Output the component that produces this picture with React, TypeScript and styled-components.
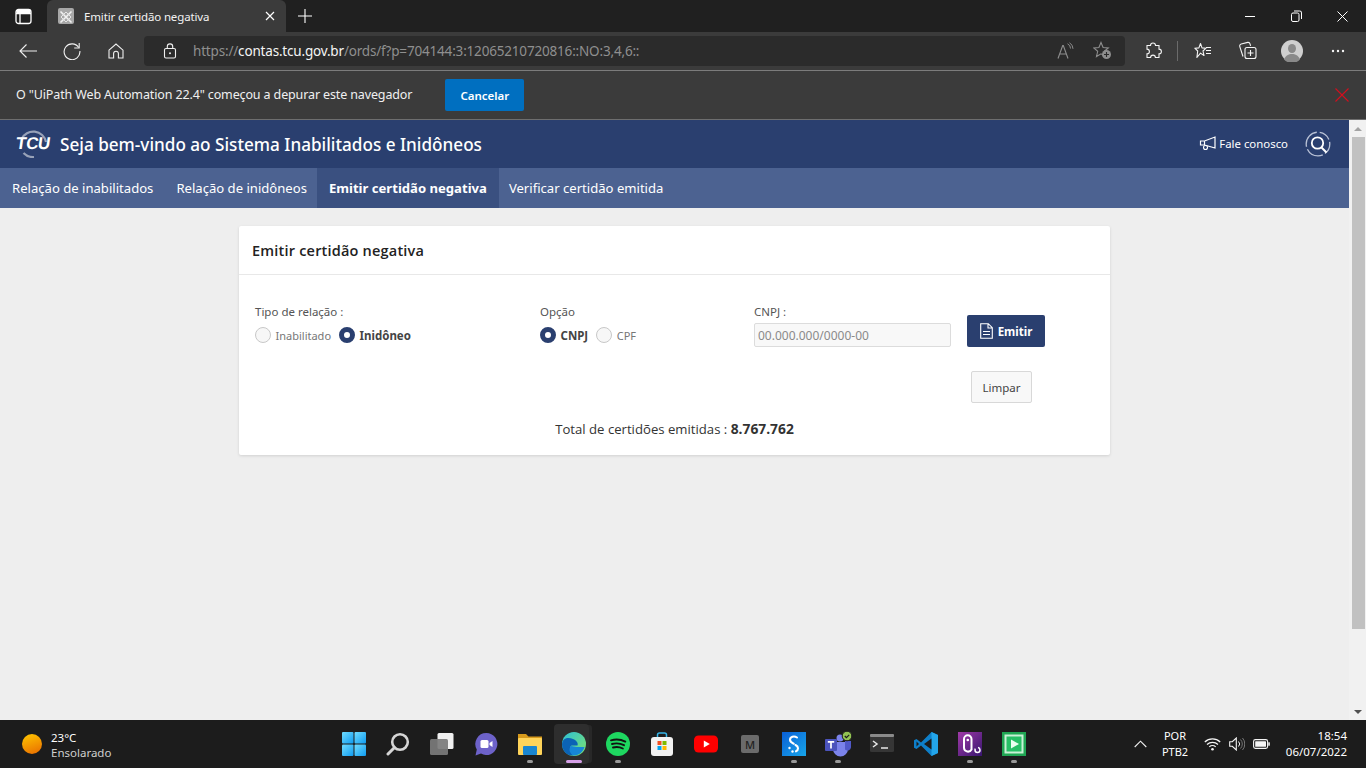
import React from "react";
import styled, { createGlobalStyle } from "styled-components";

const UI_FONT = `"Noto Sans", "Open Sans", "Liberation Sans", sans-serif`;

const App: React.FC = () => {
    return (
        <Screen>
            <GlobalStyle />
            <TabStrip>
                <TabSideButton>
                    <Glyph width="17" height="17" viewBox="0 0 17 17">
                        <rect x="1" y="1.5" width="15" height="14" rx="2.5" fill="none" stroke="#fff" strokeWidth="1.3" />
                        <path d="M1 5.5h15M5 5.5v10" stroke="#fff" strokeWidth="1.3" fill="none" />
                        <rect x="1.5" y="2" width="14" height="3.5" fill="#fff" />
                    </Glyph>
                </TabSideButton>
                <Tab>
                    <Favicon>
                        <svg width="16" height="16" viewBox="0 0 16 16">
                            <path d="M2.5 2.5l11 11M13.5 2.5l-11 11" stroke="#f2f2f2" strokeWidth="1.6" fill="none" />
                            <path d="M3 8l5-5 5 5-5 5z" stroke="#e6e6e6" strokeWidth="1" fill="none" />
                        </svg>
                    </Favicon>
                    <TabTitle>Emitir certidão negativa</TabTitle>
                    <TabClose>
                        <svg width="10" height="10" viewBox="0 0 10 10">
                            <path d="M1 1l8 8M9 1l-8 8" stroke="#fff" strokeWidth="1.2" />
                        </svg>
                    </TabClose>
                </Tab>
                <NewTab>
                    <svg width="14" height="14" viewBox="0 0 14 14">
                        <path d="M7 0v14M0 7h14" stroke="#fff" strokeWidth="1.1" />
                    </svg>
                </NewTab>
                <WindowControls>
                    <WindowButton>
                        <svg width="10" height="10" viewBox="0 0 10 10">
                            <path d="M0 5.5h10" stroke="#fff" strokeWidth="1" />
                        </svg>
                    </WindowButton>
                    <WindowButton>
                        <svg width="11" height="12" viewBox="0 0 11 12">
                            <rect x="0.5" y="3" width="7.5" height="8.5" rx="1.5" fill="none" stroke="#fff" />
                            <path d="M3 1h5.5A1.8 1.8 0 0 1 10.5 3v6" fill="none" stroke="#fff" />
                        </svg>
                    </WindowButton>
                    <WindowButton>
                        <svg width="11" height="11" viewBox="0 0 11 11">
                            <path d="M.5.5l10 10M10.5.5l-10 10" stroke="#fff" strokeWidth="1" />
                        </svg>
                    </WindowButton>
                </WindowControls>
            </TabStrip>

            <Toolbar>
                <NavIcons>
                    <NavIcon>
                        <svg width="20" height="16" viewBox="0 0 20 16">
                            <path d="M19 8H2M8.5 1.5L2 8l6.5 6.5" stroke="#f0f0f0" strokeWidth="1.1" fill="none" />
                        </svg>
                    </NavIcon>
                    <NavIcon>
                        <svg width="18" height="18" viewBox="0 0 18 18">
                            <path d="M15.7 5.5A7.9 7.9 0 1 0 16.9 9" stroke="#f0f0f0" strokeWidth="1.1" fill="none" />
                            <path d="M16.2 1v5h-5" stroke="#f0f0f0" strokeWidth="1.1" fill="none" />
                        </svg>
                    </NavIcon>
                    <NavIcon>
                        <svg width="16" height="16" viewBox="0 0 16 16">
                            <path d="M1 7.2L8 1l7 6.2V15h-4.6v-4.4a2.4 2.4 0 0 0-4.8 0V15H1z" stroke="#f0f0f0" strokeWidth="1.1" fill="none" />
                        </svg>
                    </NavIcon>
                </NavIcons>
                <AddressBar>
                    <LockIcon>
                        <svg width="14" height="16" viewBox="0 0 14 16">
                            <rect x="1.5" y="5.5" width="11" height="9.5" rx="1.5" fill="none" stroke="#f0f0f0" strokeWidth="1.1" />
                            <path d="M4.3 5.5V3.6a2.7 2.7 0 0 1 5.4 0v1.9" fill="none" stroke="#f0f0f0" strokeWidth="1.1" />
                            <circle cx="7" cy="10.2" r="1" fill="#f0f0f0" />
                        </svg>
                    </LockIcon>
                    <Url>
                        https://<UrlHost>contas.tcu.gov.br</UrlHost>/ords/f?p=704144:3:12065210720816::NO:3,4,6::
                    </Url>
                    <AddressActions>
                        <svg width="18" height="18" viewBox="0 0 18 18">
                            <path d="M1 16.5L5.7 3.5h.6l4.7 13M2.8 12h7" stroke="#8e8e8e" strokeWidth="1.1" fill="none" />
                            <path d="M10.5 1.8a5 5 0 0 1 3 4.7M12.5 .8a7 7 0 0 1 3.5 6" stroke="#8e8e8e" strokeWidth="1" fill="none" />
                        </svg>
                        <svg width="19" height="19" viewBox="0 0 19 19">
                            <path d="M8 1.5l2.1 5 5.2.4-4 3.4 1.2 5.2L8 12.8l-4.5 2.7 1.2-5.2-4-3.4 5.2-.4z" stroke="#8e8e8e" strokeWidth="1.1" fill="none" />
                            <circle cx="13.5" cy="13.5" r="4.5" fill="#8e8e8e" />
                            <path d="M13.5 11v5M11 13.5h5" stroke="#2b2b2b" strokeWidth="1.1" />
                        </svg>
                    </AddressActions>
                </AddressBar>
                <ToolbarActions>
                    <svg width="18" height="18" viewBox="0 0 18 18">
                        <path d="M6.5 3.5a2.5 2.5 0 0 1 5 0h3.5v3.6a2.4 2.4 0 0 1 0 4.8V15.500h-3.600a2.400 2.400 0 0 0-4.800 0H3v-3.600a2.400 2.400 0 0 0 0-4.800V3.500z" stroke="#f5f5f5" strokeWidth="1.1" fill="none" />
                    </svg>
                    <ToolbarDivider />
                    <svg width="18" height="18" viewBox="0 0 18 18">
                        <path d="M6.500 1.500l1.500 4.400 4 .3-3 2.800 1 4.500-3.500-2.400-3.600 4.400.8-6.500L.8 6.200l4.100-.3z" stroke="#f5f5f5" strokeWidth="1.100" fill="none" strokeLinejoin="round" />
                        <path d="M12 5.500h5M12 8.500h5M12 11.500h5" stroke="#f5f5f5" strokeWidth="1.100" />
                    </svg>
                    <CollectionsIcon>
                        <svg width="19" height="19" viewBox="0 0 19 19">
                            <path d="M5 15.500L1.800 5.600A2 2 0 0 1 3.200 3l6.600-1.600A2 2 0 0 1 12 2.800l.6 2" stroke="#f5f5f5" strokeWidth="1.100" fill="none" />
                            <rect x="7" y="6.500" width="11" height="11" rx="2" stroke="#f5f5f5" strokeWidth="1.100" fill="#3b3b3b" />
                            <path d="M12.500 9v6M9.500 12h6" stroke="#f5f5f5" strokeWidth="1.100" />
                        </svg>
                    </CollectionsIcon>
                    <Avatar>
                        <svg width="22" height="22" viewBox="0 0 22 22">
                            <circle cx="11" cy="11" r="11" fill="#cfcfcf" />
                            <ellipse cx="11" cy="8.500" rx="4" ry="4.600" fill="#8a8a8a" />
                            <path d="M3 19.500c1.600-4 4.600-5.500 8-5.500s6.400 1.500 8 5.500A11 11 0 0 1 3 19.500z" fill="#8a8a8a" />
                        </svg>
                    </Avatar>
                    <MoreDots>
                        <svg width="14" height="4" viewBox="0 0 14 4">
                            <circle cx="2" cy="2" r="1.200" fill="#f5f5f5" />
                            <circle cx="7" cy="2" r="1.200" fill="#f5f5f5" />
                            <circle cx="12" cy="2" r="1.200" fill="#f5f5f5" />
                        </svg>
                    </MoreDots>
                </ToolbarActions>
            </Toolbar>

            <InfoBar>
                <InfoText>O "UiPath Web Automation 22.4" começou a depurar este navegador</InfoText>
                <CancelButton>Cancelar</CancelButton>
                <InfoClose>
                    <svg width="14" height="14" viewBox="0 0 14 14">
                        <path d="M.5.5l13 13M13.500.5l-13 13" stroke="#d40f1e" strokeWidth="1.100" />
                    </svg>
                </InfoClose>
            </InfoBar>

            <Viewport>
                <Page>
                    <SiteHeader>
                        <Logo>
                            <LogoArc width="30" height="28" viewBox="0 0 30 28">
                                <path d="M2.500 9A13 13 0 0 1 27 12" stroke="#98a2b8" strokeWidth="2.200" fill="none" />
                                <path d="M4.500 23A13 13 0 0 0 15 27" stroke="#98a2b8" strokeWidth="2.200" fill="none" />
                            </LogoArc>
                            <LogoText>TCU</LogoText>
                        </Logo>
                        <SiteTitle>Seja bem-vindo ao Sistema Inabilitados e Inidôneos</SiteTitle>
                        <ContactLink>
                            <svg width="17" height="15" viewBox="0 0 17 15">
                                <path d="M16 1v11L5.500 9H1.500V5h4zM5.500 5v4" stroke="#fff" strokeWidth="1.200" fill="#2a3f6f" />
                                <circle cx="6.500" cy="11.500" r="2" stroke="#fff" strokeWidth="1.100" fill="none" />
                            </svg>
                            Fale conosco
                        </ContactLink>
                        <SearchBadge>
                            <svg width="26" height="26" viewBox="0 0 26 26">
                                <circle cx="13" cy="13" r="11.800" stroke="#b9c2d6" strokeWidth="1.300" strokeDasharray="11 2.500 18 2.500 20 3 12 2.500" fill="none" />
                                <circle cx="12.500" cy="12" r="5.700" stroke="#fff" strokeWidth="1.800" fill="none" />
                                <path d="M16.500 16.500l5 5" stroke="#fff" strokeWidth="2" />
                            </svg>
                        </SearchBadge>
                    </SiteHeader>
                    <SiteNav>
                        <NavItem>Relação de inabilitados</NavItem>
                        <NavItem>Relação de inidôneos</NavItem>
                        <NavItem $active>Emitir certidão negativa</NavItem>
                        <NavItem>Verificar certidão emitida</NavItem>
                    </SiteNav>
                    <Content>
                        <Card>
                            <CardHeader>Emitir certidão negativa</CardHeader>
                            <CardBody>
                                <FormRow>
                                    <RelationField>
                                        <FieldLabel>Tipo de relação :</FieldLabel>
                                        <RadioRow>
                                            <Radio />
                                            <RadioLabel>Inabilitado</RadioLabel>
                                            <Radio $checked />
                                            <RadioLabel $checked>Inidôneo</RadioLabel>
                                        </RadioRow>
                                    </RelationField>
                                    <OptionField>
                                        <FieldLabel>Opção</FieldLabel>
                                        <RadioRow>
                                            <Radio $checked />
                                            <RadioLabel $checked>CNPJ</RadioLabel>
                                            <Radio />
                                            <RadioLabel>CPF</RadioLabel>
                                        </RadioRow>
                                    </OptionField>
                                    <DocumentField>
                                        <FieldLabel>CNPJ :</FieldLabel>
                                        <DocumentInput placeholder="00.000.000/0000-00" readOnly />
                                    </DocumentField>
                                    <IssueButton>
                                        <svg width="13" height="16" viewBox="0 0 13 16">
                                            <path d="M.7.7h7.600l4 4v10.600H.7zM8 .7v4.300h4.300M3 8.500h7M3 11.500h7" stroke="#fff" strokeWidth="1.100" fill="none" />
                                        </svg>
                                        Emitir
                                    </IssueButton>
                                </FormRow>
                                <ClearRow>
                                    <ClearButton>Limpar</ClearButton>
                                </ClearRow>
                                <TotalLine>
                                    Total de certidões emitidas : <strong>8.767.762</strong>
                                </TotalLine>
                            </CardBody>
                        </Card>
                    </Content>
                </Page>
                <Scrollbar>
                    <ScrollArrow $up />
                    <ScrollThumb />
                    <ScrollArrow />
                </Scrollbar>
            </Viewport>

            <Taskbar>
                <Weather>
                    <Sun />
                    <WeatherText>
                        <span>23°C</span>
                        <small>Ensolarado</small>
                    </WeatherText>
                </Weather>
                <TaskIcons>
                    <TaskIcon>
                        <svg width="24" height="24" viewBox="0 0 24 24">
                            <defs>
                                <linearGradient id="win" x1="0" y1="0" x2="1" y2="1">
                                    <stop offset="0" stopColor="#6fdcff" />
                                    <stop offset="1" stopColor="#0f9bf0" />
                                </linearGradient>
                            </defs>
                            <rect x="0" y="0" width="11.500" height="11.500" rx="1" fill="url(#win)" />
                            <rect x="12.500" y="0" width="11.500" height="11.500" rx="1" fill="url(#win)" />
                            <rect x="0" y="12.500" width="11.500" height="11.500" rx="1" fill="url(#win)" />
                            <rect x="12.500" y="12.500" width="11.500" height="11.500" rx="1" fill="url(#win)" />
                        </svg>
                    </TaskIcon>
                    <TaskIcon>
                        <svg width="24" height="24" viewBox="0 0 24 24">
                            <circle cx="14" cy="10" r="7.800" stroke="#d5d5d5" strokeWidth="2.600" fill="none" />
                            <path d="M8.500 15.500L2 22" stroke="#d5d5d5" strokeWidth="3" strokeLinecap="round" />
                        </svg>
                    </TaskIcon>
                    <TaskIcon>
                        <svg width="24" height="24" viewBox="0 0 24 24">
                            <rect x="7.500" y="1" width="16" height="16" rx="1.500" fill="#f1f1f1" />
                            <rect x="0" y="7" width="18" height="16" rx="1.500" fill="#7b7b7b" opacity=".92" />
                        </svg>
                    </TaskIcon>
                    <TaskIcon>
                        <svg width="24" height="24" viewBox="0 0 24 24">
                            <path d="M12.500 1a11 11 0 1 1-5.500 20.600L1.500 23.500l1.300-6A11 11 0 0 1 12.500 1z" fill="#6d62c9" />
                            <rect x="6.500" y="8" width="8" height="8" rx="1.500" fill="#fff" />
                            <path d="M15.500 11l3-2v6l-3-2z" fill="#fff" />
                        </svg>
                    </TaskIcon>
                    <TaskIcon $running>
                        <svg width="24" height="24" viewBox="0 0 24 24">
                            <path d="M0 2h8l2.500 2.500H24V8H0z" fill="#d79a1c" />
                            <rect x="0" y="6" width="24" height="17" rx="1" fill="#ffd45a" />
                            <rect x="5" y="14" width="14" height="9" rx="1" fill="#1a86d0" />
                        </svg>
                    </TaskIcon>
                    <TaskIcon $active>
                        <svg width="24" height="24" viewBox="0 0 24 24">
                            <defs>
                                <linearGradient id="edgeTop" x1="0" y1="0" x2="1" y2="1">
                                    <stop offset="0" stopColor="#2cc0d8" />
                                    <stop offset="1" stopColor="#7fe36a" />
                                </linearGradient>
                            </defs>
                            <circle cx="12" cy="12" r="12" fill="url(#edgeTop)" />
                            <path d="M0 12C1 5 7 5.500 11 7c3.500 1.500 5.500 4 4.500 6.500h-6C7 15 7.500 19.500 11.500 23.500 5 24 0 19 0 12z" fill="#0b63b6" />
                            <path d="M9 14c3 1 8 1 13.500 1-1.500 5-6 9-11 8.500C7 21 6.500 16.500 9 14z" fill="#1686d6" />
                        </svg>
                    </TaskIcon>
                    <TaskIcon $running>
                        <svg width="24" height="24" viewBox="0 0 24 24">
                            <circle cx="12" cy="12" r="12" fill="#1ed760" />
                            <path d="M5 8.300c4.800-1.300 10-.9 14.300 1.300M6 12c4-1 8.300-.7 12 1.200M7 15.500c3.200-.8 6.800-.5 9.800 1" stroke="#121212" strokeWidth="1.900" strokeLinecap="round" fill="none" />
                        </svg>
                    </TaskIcon>
                    <TaskIcon>
                        <svg width="24" height="24" viewBox="0 0 24 24">
                            <path d="M7.500 5V3a2 2 0 0 1 2-2h5a2 2 0 0 1 2 2v2" stroke="#35b4e8" strokeWidth="1.500" fill="none" />
                            <rect x="1" y="5" width="22" height="19" rx="3" fill="#f2f2f2" />
                            <rect x="7.500" y="9" width="4" height="4" fill="#f25022" />
                            <rect x="12.500" y="9" width="4" height="4" fill="#7fba00" />
                            <rect x="7.500" y="14" width="4" height="4" fill="#00a4ef" />
                            <rect x="12.500" y="14" width="4" height="4" fill="#ffb900" />
                        </svg>
                    </TaskIcon>
                    <TaskIcon>
                        <svg width="24" height="24" viewBox="0 0 24 24">
                            <rect x="0" y="3.500" width="24" height="17" rx="4.500" fill="#f00" />
                            <path d="M9.800 8.500l6 3.500-6 3.500z" fill="#fff" />
                        </svg>
                    </TaskIcon>
                    <TaskIcon>
                        <MBadge>M</MBadge>
                    </TaskIcon>
                    <TaskIcon $running>
                        <svg width="24" height="24" viewBox="0 0 24 24">
                            <defs>
                                <linearGradient id="sBlue" x1="0" y1="0" x2="1" y2="1">
                                    <stop offset="0" stopColor="#0a5fd6" />
                                    <stop offset="1" stopColor="#17a6ea" />
                                </linearGradient>
                            </defs>
                            <rect width="24" height="24" fill="url(#sBlue)" />
                            <path d="M15 5.500C12 3.500 8 4.800 8 7.800c0 1.900 1.700 3 3.700 3.900" stroke="#fff" strokeWidth="2.100" fill="none" strokeLinecap="round" />
                            <path d="M13.500 13c1.500.8 2.500 1.800 2.500 3.300 0 1.500-.8 2.500-2 3" stroke="#fff" strokeWidth="2.100" fill="none" strokeLinecap="round" />
                            <circle cx="7.500" cy="16" r="1.200" fill="#fff" />
                            <circle cx="10.500" cy="19.500" r="1.200" fill="#fff" />
                        </svg>
                    </TaskIcon>
                    <TaskIcon $running>
                        <svg width="28" height="26" viewBox="0 0 28 26">
                            <circle cx="16" cy="7" r="3.500" fill="#7b83eb" />
                            <path d="M9 11h15v7a7.500 7.500 0 0 1-15 0z" fill="#7b83eb" />
                            <path d="M21 10h6v6.500a3.500 3.500 0 0 1-6 2z" fill="#5059c9" />
                            <rect x="1" y="8" width="12" height="12" rx="1" fill="#4b53bc" />
                            <path d="M3.800 10.800h6.400M7 10.800v6.600" stroke="#fff" strokeWidth="1.700" />
                            <circle cx="23" cy="5" r="4.800" fill="#92c353" stroke="#1c1c1c" strokeWidth="1" />
                            <path d="M20.800 5l1.600 1.600 2.800-2.800" stroke="#1c1c1c" strokeWidth="1.200" fill="none" />
                        </svg>
                    </TaskIcon>
                    <TaskIcon>
                        <svg width="24" height="20" viewBox="0 0 24 20">
                            <rect x="0" y="0" width="24" height="18" rx="1.500" fill="#363636" />
                            <rect x="0" y="0" width="24" height="3" rx="1" fill="#8a8a8a" />
                            <path d="M3 7l4 3-4 3" stroke="#e8e8e8" strokeWidth="1.500" fill="none" />
                            <path d="M11 14h7" stroke="#e8e8e8" strokeWidth="1.500" />
                        </svg>
                    </TaskIcon>
                    <TaskIcon>
                        <svg width="24" height="24" viewBox="0 0 24 24">
                            <path d="M17.500 0L24 3v18l-6.500 3L7 13.500 2.500 17 0 15.800V8.200L2.500 7 7 10.500z" fill="#0e7fc9" />
                            <path d="M17.500 0L24 3v18l-6.500 3z" fill="#23a5ea" />
                            <path d="M17.500 6.500v11L10 12z" fill="#1c1c1c" />
                            <path d="M2.500 9.500v5L5 12z" fill="#1c1c1c" />
                        </svg>
                    </TaskIcon>
                    <TaskIcon $running>
                        <svg width="24" height="24" viewBox="0 0 24 24">
                            <defs>
                                <linearGradient id="uiP" x1="0" y1="0" x2="1" y2="1">
                                    <stop offset="0" stopColor="#a03aa8" />
                                    <stop offset="1" stopColor="#37156e" />
                                </linearGradient>
                            </defs>
                            <rect width="24" height="24" fill="url(#uiP)" />
                            <path d="M6 7v9a4 4 0 0 0 7.500 1.500V7A3.700 3.700 0 0 0 6 7z" stroke="#fff" strokeWidth="2" fill="none" />
                            <circle cx="9.800" cy="8" r="1.300" fill="#fff" />
                            <circle cx="19.500" cy="18" r="2.500" stroke="#fff" strokeWidth="1.500" fill="none" strokeDasharray="9 3" />
                        </svg>
                    </TaskIcon>
                    <TaskIcon $running>
                        <svg width="24" height="24" viewBox="0 0 24 24">
                            <rect width="24" height="24" fill="#1fa653" />
                            <rect x="2.500" y="2.500" width="19" height="19" fill="#c9f0d5" />
                            <rect x="4.500" y="4.500" width="15" height="15" fill="#27bf66" />
                            <path d="M9 7.500l8 4.500-8 4.500z" fill="#eafff0" />
                        </svg>
                    </TaskIcon>
                </TaskIcons>
                <Tray>
                    <TrayChevron>
                        <svg width="13" height="8" viewBox="0 0 13 8">
                            <path d="M.7 7L6.500 1.200 12.300 7" stroke="#f0f0f0" strokeWidth="1.100" fill="none" />
                        </svg>
                    </TrayChevron>
                    <TrayLang>
                        <span>POR</span>
                        <span>PTB2</span>
                    </TrayLang>
                    <TrayIcons>
                        <svg width="17" height="14" viewBox="0 0 17 14">
                            <path d="M.8 5a11 11 0 0 1 15.400 0M3 7.500a8 8 0 0 1 11 0M5.300 9.900a4.700 4.700 0 0 1 6.400 0" stroke="#f5f5f5" strokeWidth="1.200" fill="none" />
                            <circle cx="8.500" cy="12.300" r="1.300" fill="#f5f5f5" />
                        </svg>
                        <svg width="16" height="14" viewBox="0 0 16 14">
                            <path d="M.7 4.700h2.600L7.300 1v12L3.300 9.300H.7z" stroke="#f5f5f5" strokeWidth="1.100" fill="none" />
                            <path d="M9.500 4.500a3.500 3.500 0 0 1 0 5" stroke="#f5f5f5" strokeWidth="1" fill="none" />
                            <path d="M11.500 2.500a6.500 6.500 0 0 1 0 9M13.500 1a9 9 0 0 1 0 12" stroke="#777" strokeWidth="1" fill="none" />
                        </svg>
                        <svg width="17" height="10" viewBox="0 0 17 10">
                            <rect x=".6" y=".6" width="14" height="8.800" rx="1.800" stroke="#f5f5f5" strokeWidth="1.100" fill="none" />
                            <rect x="2.200" y="2.200" width="10.800" height="5.600" rx=".5" fill="#f5f5f5" />
                            <rect x="15.300" y="3.300" width="1.500" height="3.400" fill="#f5f5f5" />
                        </svg>
                    </TrayIcons>
                    <Clock>
                        <span>18:54</span>
                        <span>06/07/2022</span>
                    </Clock>
                </Tray>
            </Taskbar>
        </Screen>
    );
};

export default App;

/* ~~~~~~ -- styling -- ~~~~~~ */

const GlobalStyle = createGlobalStyle`
    html, body {
        margin: 0;
        padding: 0;
        overflow: hidden;
    }
    * {
        box-sizing: border-box;
    }
`;

const Screen = styled.div`
    width: 1366px;
    height: 768px;
    display: flex;
    flex-direction: column;
    overflow: hidden;
    font-family: ${UI_FONT};
`;

/* browser chrome */

const TabStrip = styled.div`
    height: 32px;
    flex: none;
    display: flex;
    align-items: flex-end;
    background: #202020;
`;

const TabSideButton = styled.div`
    width: 47px;
    height: 32px;
    display: flex;
    align-items: center;
    padding-left: 15px;
`;

const Glyph = styled.svg`
    display: block;
`;

const Tab = styled.div`
    width: 239px;
    height: 32px;
    display: flex;
    align-items: center;
    padding: 0 0 0 11px;
    background: #3b3b3b;
    border-radius: 6px 6px 0 0;
`;

const Favicon = styled.div`
    width: 16px;
    height: 16px;
    background: #a8a8a8;
    border-radius: 2px;
`;

const TabTitle = styled.span`
    flex: 1;
    margin-left: 10px;
    color: #f2f2f2;
    font-size: 11.5px;
    letter-spacing: -0.15px;
    white-space: nowrap;
`;

const TabClose = styled.div`
    width: 32px;
    display: flex;
    justify-content: center;
`;

const NewTab = styled.div`
    width: 38px;
    height: 32px;
    display: flex;
    align-items: center;
    justify-content: center;
`;

const WindowControls = styled.div`
    margin-left: auto;
    display: flex;
    height: 32px;
    padding-right: 1px;
`;

const WindowButton = styled.div`
    width: 46px;
    display: flex;
    align-items: center;
    justify-content: center;
`;

const Toolbar = styled.div`
    height: 39px;
    flex: none;
    display: flex;
    align-items: center;
    padding-bottom: 1px;
    background: #3b3b3b;
    border-bottom: 1px solid #7c7c7c;
`;

const NavIcons = styled.div`
    display: flex;
    padding-left: 6px;
`;

const NavIcon = styled.div`
    width: 44px;
    height: 30px;
    display: flex;
    align-items: center;
    justify-content: center;
`;

const AddressBar = styled.div`
    width: 981px;
    height: 30px;
    margin-left: 6px;
    display: flex;
    align-items: center;
    background: #2b2b2b;
    border-radius: 4px;
    font-size: 14px;
`;

const LockIcon = styled.div`
    width: 49px;
    padding-left: 19px;
    display: flex;
`;

const Url = styled.span`
    color: #8f8f8f;
    font-size: 13.5px;
    white-space: nowrap;
    letter-spacing: -0.18px;
`;

const UrlHost = styled.span`
    color: #f4f4f4;
`;

const AddressActions = styled.div`
    margin-left: auto;
    display: flex;
    align-items: center;
    gap: 18px;
    padding-right: 13px;
`;

const ToolbarActions = styled.div`
    flex: 1;
    display: flex;
    align-items: center;
    padding-left: 19px;
`;

const ToolbarDivider = styled.div`
    width: 1px;
    height: 20px;
    margin: 0 16px 0 15px;
    background: #6b6b6b;
`;

const CollectionsIcon = styled.div`
    margin-left: 26px;
    display: flex;
`;

const Avatar = styled.div`
    margin-left: 24px;
    display: flex;
`;

const MoreDots = styled.div`
    margin-left: 28px;
    display: flex;
`;

const InfoBar = styled.div`
    height: 49px;
    flex: none;
    display: flex;
    align-items: center;
    padding: 0 0 2px 16px;
    background: #3b3b3b;
    border-bottom: 1px solid #6e6e6e;
`;

const InfoText = styled.span`
    color: #f0f0f0;
    font-size: 12.5px;
    letter-spacing: -0.13px;
    white-space: nowrap;
`;

const CancelButton = styled.button`
    width: 79px;
    height: 32px;
    margin: 2px 0 0 33px;
    border: none;
    border-radius: 2px;
    background: #006fc0;
    color: #fff;
    font-family: ${UI_FONT};
    font-size: 11.5px;
    font-weight: 600;
`;

const InfoClose = styled.div`
    margin: 2px 0 0 auto;
    padding-right: 17px;
    display: flex;
`;

/* page */

const Viewport = styled.div`
    flex: 1;
    min-height: 0;
    display: flex;
`;

const Page = styled.div`
    flex: 1;
    display: flex;
    flex-direction: column;
    background: #eeeeee;
`;

const SiteHeader = styled.header`
    height: 48px;
    flex: none;
    display: flex;
    align-items: center;
    padding-left: 15px;
    background: #2a3f6f;
`;

const Logo = styled.div`
    position: relative;
    width: 37px;
    height: 28px;
    display: flex;
    align-items: center;
`;

const LogoArc = styled.svg`
    position: absolute;
    left: 4px;
    top: 0;
`;

const LogoText = styled.span`
    position: relative;
    display: inline-block;
    margin-left: 1px;
    color: #fff;
    font-family: "Liberation Sans", sans-serif;
    font-size: 17px;
    font-weight: 700;
    letter-spacing: -0.3px;
    transform: skewX(-8deg);
`;

const SiteTitle = styled.h1`
    margin: 0 0 0 8px;
    color: #fff;
    font-size: 17.15px;
    font-weight: 500;
    white-space: nowrap;
`;

const ContactLink = styled.div`
    margin-left: auto;
    padding-bottom: 2px;
    display: flex;
    align-items: center;
    gap: 3px;
    color: #fff;
    font-size: 11.4px;
`;

const SearchBadge = styled.div`
    margin: 0 18px 0 17px;
    display: flex;
`;

const SiteNav = styled.nav`
    height: 40px;
    flex: none;
    display: flex;
    padding-left: 2px;
    background: #4c6291;
`;

const NavItem = styled.div<{ $active?: boolean }>`
    display: flex;
    align-items: center;
    padding: 0 ${(p) => (p.$active ? 12 : 10)}px;
    background: ${(p) => (p.$active ? "#3a5080" : "transparent")};
    color: #fff;
    font-size: 13.1px;
    font-weight: ${(p) => (p.$active ? 700 : 400)};
    white-space: nowrap;
    &:nth-child(2) {
        margin-left: 3px;
    }
`;

const Content = styled.main`
    flex: 1;
    padding: 18px 239px 0;
`;

const Card = styled.section`
    width: 871px;
    height: 229px;
    background: #fff;
    border-radius: 2px;
    box-shadow: 0 1px 3px rgba(0, 0, 0, 0.12);
    color: #333;
`;

const CardHeader = styled.h2`
    height: 49px;
    margin: 0;
    padding: 0 13px;
    display: flex;
    align-items: center;
    border-bottom: 1px solid #e8e8e8;
    color: #222;
    font-family: "Open Sans", sans-serif;
    font-size: 14.5px;
    font-weight: 600;
    letter-spacing: 0.2px;
`;

const CardBody = styled.div`
    padding: 29px 16px 0;
`;

const FormRow = styled.div`
    display: flex;
    align-items: flex-start;
`;

const RelationField = styled.div`
    width: 285px;
`;

const OptionField = styled.div`
    width: 214px;
`;

const DocumentField = styled.div`
    width: 213px;
`;

const FieldLabel = styled.div`
    height: 15px;
    margin-bottom: 4px;
    color: #555;
    font-size: 11.5px;
    line-height: 15px;
`;

const RadioRow = styled.div`
    height: 24px;
    display: flex;
    align-items: center;
`;

const Radio = styled.span<{ $checked?: boolean }>`
    width: 16px;
    height: 16px;
    flex: none;
    border-radius: 50%;
    border: ${(p) => (p.$checked ? "5px solid #2a3f6f" : "1px solid #c8c8c8")};
    background: ${(p) => (p.$checked ? "#fff" : "#f7f7f7")};
`;

const RadioLabel = styled.span<{ $checked?: boolean }>`
    margin: 0 8px 0 4.5px;
    color: ${(p) => (p.$checked ? "#444" : "#777")};
    font-size: ${(p) => (p.$checked ? 11.5 : 11)}px;
    font-weight: ${(p) => (p.$checked ? 700 : 400)};
`;

const DocumentInput = styled.input`
    display: block;
    width: 197px;
    height: 24px;
    padding: 0 3px;
    border: 1px solid #dcdcdc;
    border-radius: 2px;
    background: #f8f8f8;
    font-family: ${UI_FONT};
    font-size: 12px;
    &::placeholder {
        color: #8a8a8a;
    }
`;

const IssueButton = styled.button`
    width: 78px;
    height: 32px;
    margin-top: 11px;
    display: flex;
    align-items: center;
    justify-content: center;
    gap: 5px;
    border: none;
    border-radius: 2px;
    background: #2a3f6f;
    color: #fff;
    font-family: ${UI_FONT};
    font-size: 11.5px;
    font-weight: 700;
`;

const ClearRow = styled.div`
    display: flex;
    justify-content: flex-end;
    padding-right: 62px;
    margin-top: 24px;
`;

const ClearButton = styled.button`
    width: 61px;
    height: 32px;
    border: 1px solid #d8d8d8;
    border-radius: 2px;
    background: #f8f8f8;
    color: #444;
    font-family: ${UI_FONT};
    font-size: 11.5px;
`;

const TotalLine = styled.div`
    margin-top: 16px;
    text-align: center;
    color: #333;
    font-family: "Open Sans", sans-serif;
    font-size: 13.15px;
    strong {
        font-size: 13.8px;
        font-weight: 700;
    }
`;

const Scrollbar = styled.div`
    width: 17px;
    flex: none;
    display: flex;
    flex-direction: column;
    align-items: center;
    background: #f1f1f1;
`;

const ScrollArrow = styled.div<{ $up?: boolean }>`
    height: 17px;
    flex: none;
    margin-top: ${(p) => (p.$up ? 0 : "auto")};
    display: flex;
    align-items: center;
    &::after {
        content: "";
        border-left: 4px solid transparent;
        border-right: 4px solid transparent;
        border-${(p) => (p.$up ? "bottom" : "top")}: 4px solid ${(p) => (p.$up ? "#a3a3a3" : "#505050")};
    }
`;

const ScrollThumb = styled.div`
    width: 13px;
    height: 492px;
    margin-left: 1px;
    background: #c1c1c1;
`;

/* taskbar */

const Taskbar = styled.footer`
    height: 48px;
    flex: none;
    display: flex;
    align-items: center;
    background: #1c1c1c;
    color: #fff;
`;

const Weather = styled.div`
    width: 332px;
    display: flex;
    align-items: center;
    padding-left: 22px;
`;

const Sun = styled.div`
    width: 20px;
    height: 20px;
    border-radius: 50%;
    background: linear-gradient(160deg, #ffc800, #e86a00);
`;

const WeatherText = styled.div`
    margin-left: 9px;
    padding-top: 2px;
    display: flex;
    flex-direction: column;
    font-size: 11.5px;
    line-height: 16px;
    small {
        margin-top: -1px;
        color: #cfcfcf;
        font-size: 11.5px;
    }
`;

const TaskIcons = styled.div`
    display: flex;
    height: 48px;
`;

const TaskIcon = styled.div<{ $running?: boolean; $active?: boolean }>`
    position: relative;
    width: 44px;
    height: 48px;
    display: flex;
    align-items: center;
    justify-content: center;
    &::before {
        content: "";
        display: ${(p) => (p.$active ? "block" : "none")};
        position: absolute;
        left: 2px;
        top: 4px;
        width: 35px;
        height: 40px;
        border-radius: 4px;
        background: #2e2e2e;
        box-shadow: 4px 0 0 -1px #282828;
    }
    svg {
        position: relative;
    }
    &::after {
        content: "";
        display: ${(p) => (p.$running || p.$active ? "block" : "none")};
        position: absolute;
        left: 50%;
        bottom: 5px;
        width: ${(p) => (p.$active ? 16 : 6)}px;
        height: 3px;
        margin-left: ${(p) => (p.$active ? -8 : -3)}px;
        border-radius: 2px;
        background: ${(p) => (p.$active ? "#d6a0e8" : "#9a9a9a")};
    }
`;

const MBadge = styled.div`
    width: 18px;
    height: 18px;
    display: flex;
    align-items: center;
    justify-content: center;
    border-radius: 2px;
    background: #6b6b6b;
    color: #222;
    font-size: 11px;
    font-weight: 500;
`;

const Tray = styled.div`
    flex: 1;
    display: flex;
    align-items: center;
    justify-content: flex-end;
    padding-right: 19px;
    font-size: 11.5px;
`;

const TrayChevron = styled.div`
    display: flex;
    margin-right: 8px;
`;

const TrayLang = styled.div`
    width: 40px;
    display: flex;
    flex-direction: column;
    align-items: center;
    font-size: 11px;
    line-height: 16px;
`;

const TrayIcons = styled.div`
    display: flex;
    align-items: center;
    gap: 8px;
    margin-left: 9px;
`;

const Clock = styled.div`
    width: 77px;
    display: flex;
    flex-direction: column;
    align-items: flex-end;
    line-height: 16px;
`;
